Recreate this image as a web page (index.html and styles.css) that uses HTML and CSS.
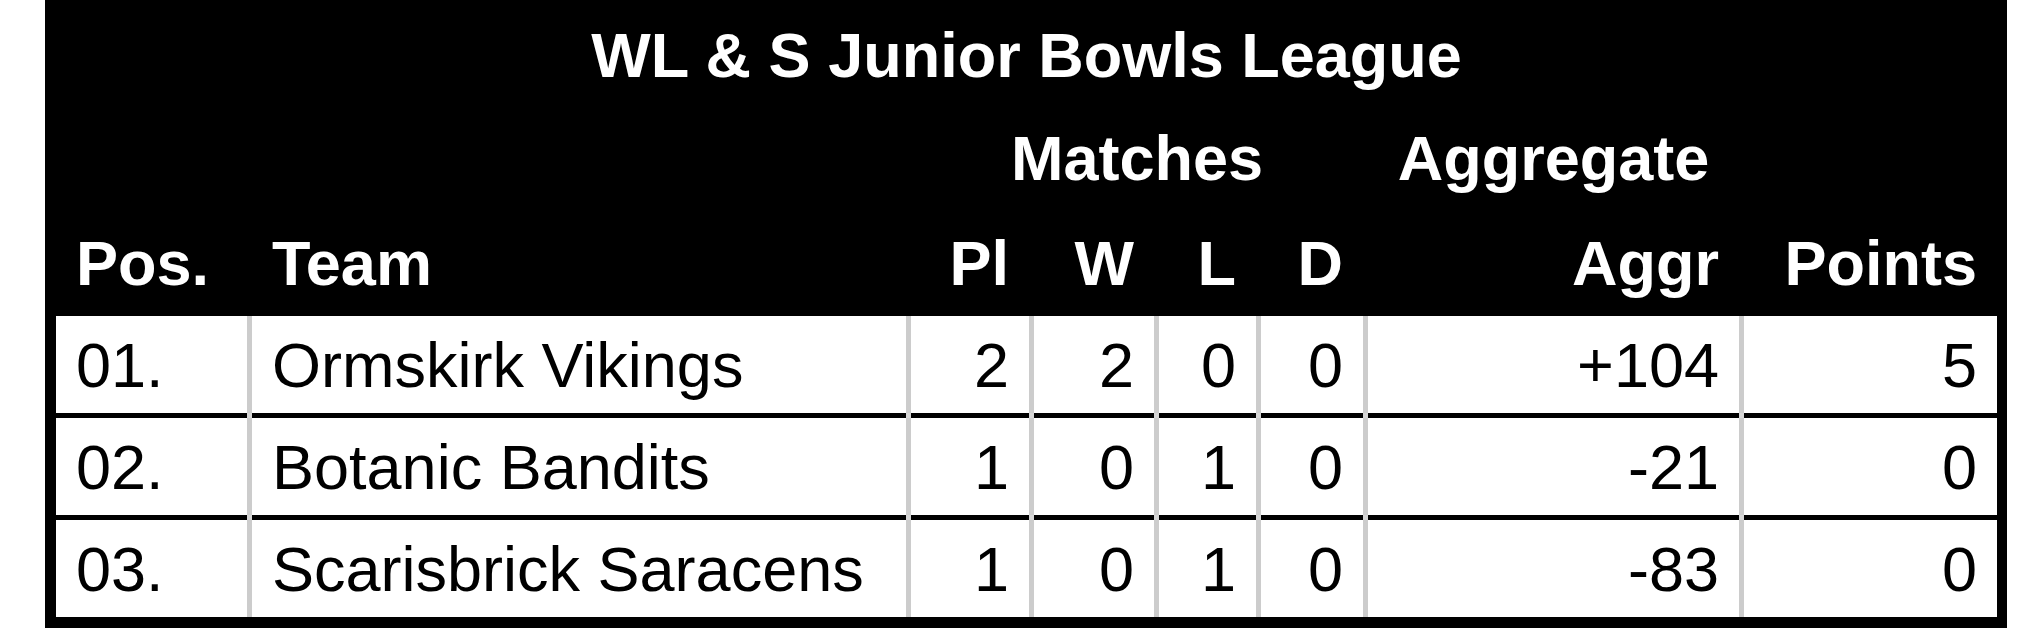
FILE: index.html
```html
<!DOCTYPE html>
<html lang="en">
<head>
<meta charset="utf-8">
<title>WL &amp; S Junior Bowls League</title>
<link rel="stylesheet" href="styles.css">
</head>
<body>
<table class="league">
  <colgroup>
    <col class="c-pos">
    <col class="c-team">
    <col class="c-pl">
    <col class="c-w">
    <col class="c-l">
    <col class="c-d">
    <col class="c-aggr">
    <col class="c-pts">
  </colgroup>
  <thead>
    <tr class="title-row">
      <th colspan="8">WL &amp; S Junior Bowls League</th>
    </tr>
    <tr class="group-row">
      <th colspan="2"></th>
      <th colspan="4" class="center">Matches</th>
      <th class="center">Aggregate</th>
      <th></th>
    </tr>
    <tr class="col-row">
      <th class="left">Pos.</th>
      <th class="left">Team</th>
      <th>Pl</th>
      <th>W</th>
      <th>L</th>
      <th>D</th>
      <th>Aggr</th>
      <th>Points</th>
    </tr>
  </thead>
  <tbody>
    <tr>
      <td class="left">01.</td>
      <td class="left">Ormskirk Vikings</td>
      <td>2</td><td>2</td><td>0</td><td>0</td>
      <td>+104</td><td>5</td>
    </tr>
    <tr>
      <td class="left">02.</td>
      <td class="left">Botanic Bandits</td>
      <td>1</td><td>0</td><td>1</td><td>0</td>
      <td>-21</td><td>0</td>
    </tr>
    <tr>
      <td class="left">03.</td>
      <td class="left">Scarisbrick Saracens</td>
      <td>1</td><td>0</td><td>1</td><td>0</td>
      <td>-83</td><td>0</td>
    </tr>
  </tbody>
</table>
</body>
</html>
```
FILE: styles.css
```css
html, body {
  margin: 0;
  padding: 0;
  background: #ffffff;
}

body {
  font-family: "Liberation Sans", Arial, sans-serif;
}

.league {
  margin-left: 45px;
  width: 1962px;
  table-layout: fixed;
  border-collapse: separate;
  border-spacing: 0;
  border-style: solid;
  border-color: #000;
  border-width: 0 10px 11px 11px;
  background: #000;
  font-size: 63px;
  line-height: 71px;
}

.c-pos { width: 191px; }
.c-team { width: 659px; }
.c-pl { width: 123px; }
.c-w { width: 125px; }
.c-l { width: 102px; }
.c-d { width: 107px; }
.c-aggr { width: 376px; }
.c-pts { width: 258px; }

.league th {
  color: #fff;
  font-weight: bold;
  text-align: right;
  padding: 19px 20px 12px;
  white-space: nowrap;
}

.group-row th + th,
.col-row th + th {
  border-left: 5px solid #000;
}

.league th.left,
.league td.left {
  text-align: left;
}

.league th.center {
  text-align: center;
}

.title-row th {
  text-align: center;
  padding-top: 20px;
  padding-bottom: 13px;
}

.group-row th {
  padding-top: 19px;
  padding-bottom: 15px;
}

.league td {
  position: relative;
  background: #fff;
  color: #000;
  font-weight: normal;
  text-align: right;
  white-space: nowrap;
  border-top: 5px solid #000;
  padding: 14px 20px 12px;
}

.league td + td {
  border-left: 5px solid #cccccc;
}

.league tbody td + td::before {
  content: "";
  position: absolute;
  left: -5px;
  top: -5px;
  width: 5px;
  height: 5px;
  background: #000;
}

.league tbody tr + tr td + td::before {
  background: #d6d6d6;
}
```
